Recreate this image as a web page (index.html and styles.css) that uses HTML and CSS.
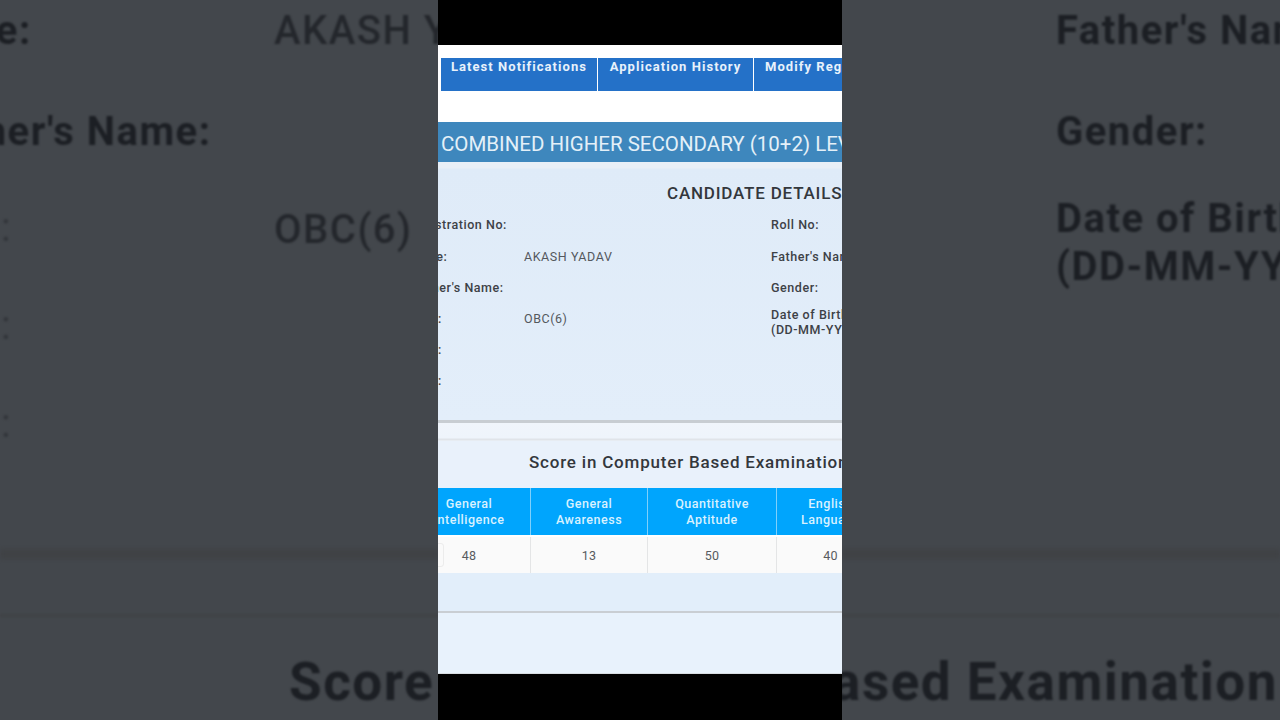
FILE: index.html
```html
<!DOCTYPE html>
<html lang="en">
<head>
<meta charset="utf-8">
<title>Candidate Details</title>
<link rel="stylesheet" href="styles.css">
</head>
<body>
<div class="stage">
  <aside class="side side-left">
    <span class="ghost ghost-b g-name">Name:</span>
    <span class="ghost g-akash">AKASH YADAV</span>
    <span class="ghost ghost-b g-mother">Mother's Name:</span>
    <span class="ghost g-obc">OBC(6)</span>
    <span class="ghost-colon c1">:</span>
    <span class="ghost-colon c2">:</span>
    <span class="ghost-colon c3">:</span>
    <span class="band b1"></span>
    <span class="band b2"></span>
    <span class="ghost ghost-b g-score">Score in Computer</span>
  </aside>

  <main class="phone">
    <div class="topgap"></div>
    <nav class="tabs">
      <a class="tab t1">Latest Notifications</a>
      <a class="tab t2">Application History</a>
      <a class="tab t3">Modify Registration</a>
    </nav>
    <div class="title-band">COMBINED HIGHER SECONDARY (10+2) LEVEL</div>
    <section class="candidate">
      <h2 class="candidate-h">CANDIDATE DETAILS</h2>
      <div class="details">
        <span class="lab">Registration No:</span><span class="val"></span><span class="lab">Roll No:</span>
        <span class="lab">Name:</span><span class="val">AKASH YADAV</span><span class="lab">Father's Name:</span>
        <span class="lab">Mother's Name:</span><span class="val"></span><span class="lab">Gender:</span>
        <span class="lab lab-colon">:</span><span class="val">OBC(6)</span><span class="lab lab-two">Date of Birth<br>(DD-MM-YYYY):</span>
        <span class="lab lab-colon">:</span><span class="val"></span><span class="lab"></span>
        <span class="lab lab-colon">:</span><span class="val"></span><span class="lab"></span>
      </div>
    </section>
    <div class="spacer"></div>
    <section class="score">
      <h2 class="score-h">Score in Computer Based Examination</h2>
      <div class="table">
        <div class="th">General<br>Intelligence</div>
        <div class="th">General<br>Awareness</div>
        <div class="th">Quantitative<br>Aptitude</div>
        <div class="th">English<br>Language</div>
        <div class="td td-first">48<span class="stub"></span></div>
        <div class="td">13</div>
        <div class="td">50</div>
        <div class="td">40</div>
      </div>
    </section>
    <div class="tail"></div>
  </main>

  <aside class="side side-right">
    <span class="ghost ghost-b g-father">Father's Name:</span>
    <span class="ghost ghost-b g-gender">Gender:</span>
    <span class="ghost ghost-b g-dob">Date of Birth<br>(DD-MM-YYYY):</span>
    <span class="band b1"></span>
    <span class="band b2"></span>
    <span class="ghost ghost-b g-exam">Based Examination</span>
  </aside>
</div>
</body>
</html>
```
FILE: styles.css
```css
* { box-sizing: border-box; }
html, body { margin: 0; height: 100%; background: #000; overflow: hidden; }
body { font-family: Roboto, "Liberation Sans", sans-serif; }

.stage {
  display: grid;
  grid-template-columns: 438px 404px 438px;
  width: 1280px;
  height: 720px;
}

/* Blurred video backdrop */
.side { position: relative; overflow: hidden; background: #43474c; }
.ghost {
  position: absolute;
  font-size: 40px;
  font-weight: 500;
  line-height: 48px;
  letter-spacing: 1.5px;
  white-space: nowrap;
  color: #24272c;
  filter: blur(1px);
}
.ghost-b { font-weight: 700; color: #1c1f24; }
.ghost-colon {
  position: absolute;
  left: 1px;
  font-size: 40px;
  line-height: 48px;
  color: #33363b;
  filter: blur(1px);
}
.band { position: absolute; left: 0; right: 0; }
.b1 { top: 549px; height: 10px; background: #404245; filter: blur(2px); }
.b2 { top: 614px; height: 3px; background: #404346; filter: blur(1px); }

.side-left .g-name { left: -93px; top: 7px; }
.g-akash { left: 274px; top: 7px; }
.side-left .g-mother { left: -92px; top: 108px; }
.g-obc { left: 274px; top: 206px; }
.c1 { top: 204px; }
.c2 { top: 302px; }
.c3 { top: 400px; }
.g-score { left: 289px; top: 654px; font-size: 53px; line-height: 56px; letter-spacing: 1.5px; }

.g-father { left: 214px; top: 7px; }
.g-gender { left: 214px; top: 108px; }
.g-dob { left: 214px; top: 195px; line-height: 48px; }
.g-exam { right: 2px; top: 654px; font-size: 53px; line-height: 56px; letter-spacing: 1.5px; }

/* Centre column */
.phone {
  display: flex;
  flex-direction: column;
  padding: 45px 0 46px;
  overflow: hidden;
  background: #000;
}
.topgap { height: 13px; flex: none; background: #fff; }
.tabs {
  display: flex;
  flex: none;
  height: 64px;
  padding: 0 0 31px 3px;
  background: #fff;
  gap: 1px;
}
.tab {
  flex: none;
  height: 33px;
  padding-top: 1px;
  background: #2471c8;
  color: #e8f1fb;
  font-size: 13px;
  font-weight: 700;
  line-height: 16px;
  letter-spacing: 1.05px;
  text-align: center;
  white-space: nowrap;
}
.t1 { width: 156px; }
.t2 { width: 155px; }
.t3 { width: 156px; padding-left: 11px; text-align: left; }

.title-band {
  flex: none;
  height: 40px;
  padding-left: 3px;
  background: #3e87bd;
  color: #e4f0f8;
  font-size: 20.5px;
  line-height: 44px;
  white-space: nowrap;
  overflow: hidden;
}

.candidate {
  flex: none;
  height: 261px;
  padding-top: 6px;
  background: linear-gradient(#e8eff7 0, #e8eff7 6px, #dfebf8 7px, #e3eefa 100%);
  border-bottom: 3px solid #c8cdd2;
}
.candidate-h {
  margin: 0;
  height: 38px;
  padding: 13px 0 0 229px;
  color: #33373c;
  font-size: 17px;
  font-weight: 500;
  line-height: 24px;
  letter-spacing: .8px;
  white-space: nowrap;
}
.details {
  display: grid;
  grid-template-columns: 116px 247px 160px;
  grid-auto-rows: 31.2px;
  margin-left: -30px;
  padding-top: 3.3px;
  align-items: center;
  white-space: nowrap;
}
.lab { color: #3d4146; font-size: 12.5px; font-weight: 500; line-height: 15px; letter-spacing: .55px; }
.val { color: #54585d; font-size: 12.5px; line-height: 15px; letter-spacing: .55px; }
.lab-colon { padding-left: 30px; }
.lab-two { padding-top: 8px; }

.spacer {
  flex: none;
  height: 18px;
  background: linear-gradient(#f0f5fb 0, #eef4fb 15px, #e0e4e9 16px, #e0e4e9 17px, #eef4fb 18px);
}

.score {
  flex: none;
  height: 172px;
  background: #e9f1fb;
  border-bottom: 2px solid #c9ced3;
}
.score-h {
  margin: 0;
  height: 47px;
  padding-left: 91px;
  color: #33373c;
  font-size: 17px;
  font-weight: 500;
  line-height: 43px;
  letter-spacing: .8px;
  white-space: nowrap;
}
.table {
  display: grid;
  grid-template-columns: 123px 117px 129px 108px;
  grid-template-rows: 47px 36px;
  row-gap: 2px;
  margin-left: -30px;
  padding-bottom: 37px;
  background: linear-gradient(#fff, #fff 83px, #e2eefa 85px);
  height: 123px;
  width: 434px;
  overflow: hidden;
}
.th {
  display: flex;
  align-items: center;
  justify-content: center;
  background: #00a5fd;
  border-right: 1px solid #7fd0fb;
  color: #d8f1ff;
  font-size: 12.5px;
  font-weight: 500;
  line-height: 16px;
  letter-spacing: .5px;
  text-align: center;
}
.td {
  position: relative;
  display: flex;
  align-items: center;
  justify-content: center;
  background: #fafafa;
  border-right: 1px solid #e4e5e6;
  color: #585b5f;
  font-size: 12.5px;
  letter-spacing: .3px;
}
.stub {
  position: absolute;
  left: 22px;
  top: 6px;
  width: 14px;
  height: 24px;
  border: 1px solid #ececec;
  border-radius: 3px;
}
.tail {
  flex: 1;
  background: #e8f2fc;
  border-bottom: 1px solid #d8dde2;
}
```
